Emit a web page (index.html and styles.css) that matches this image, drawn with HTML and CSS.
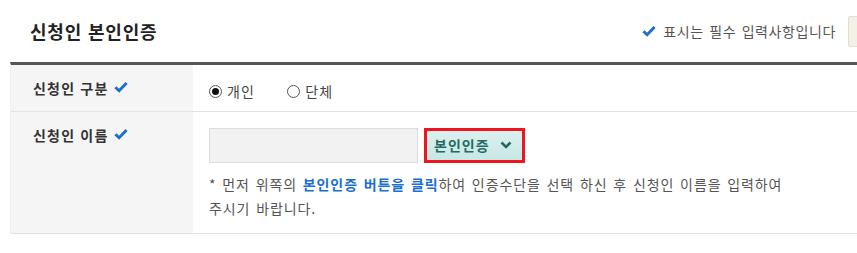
FILE: index.html
```html
<!DOCTYPE html>
<html lang="ko">
  <head>
    <meta charset="utf-8">
    <title>신청인 본인인증</title>
    <link rel="stylesheet" href="styles.css">
  </head>
  <body>

    <div class="auth">

      <!-- 제목 -->
      <div class="auth__head">
        <h2 class="auth__title">신청인 본인인증</h2>
        <div class="auth__note">
          <svg class="ico-check" viewBox="0 0 16 14"><path d="M1.5 7.2 L5.8 11.4 L14.5 2.2" /></svg>
          표시는 필수 입력사항입니다
        </div>
        <span class="auth__btn-side"></span>
      </div>

      <!-- 입력 표 -->
      <div class="form-tbl">
        <div class="form-tbl__row">
          <div class="form-tbl__label">신청인 구분 <svg class="ico-check" viewBox="0 0 16 14"><path d="M1.5 7.2 L5.8 11.4 L14.5 2.2" /></svg></div>
          <div class="form-tbl__value form-tbl__value--radio">
            <label class="radio"><span class="radio__dot is-on"></span>개인</label>
            <label class="radio"><span class="radio__dot"></span>단체</label>
          </div>
        </div>
        <div class="form-tbl__row">
          <div class="form-tbl__label">신청인 이름 <svg class="ico-check" viewBox="0 0 16 14"><path d="M1.5 7.2 L5.8 11.4 L14.5 2.2" /></svg></div>
          <div class="form-tbl__value">
            <div class="name-line">
              <input class="name-input" type="text" disabled>
              <span class="auth-btn">
                <span class="auth-btn__inner">본인인증
                  <svg class="ico-down" viewBox="0 0 12 8"><path d="M1.5 1.5 L6 6 L10.5 1.5" /></svg>
                </span>
              </span>
            </div>
            <p class="help">* 먼저 위쪽의 <b class="help__em">본인인증 버튼을 클릭</b>하여 인증수단을 선택 하신 후 신청인 이름을 입력하여<br>주시기 바랍니다.</p>
          </div>
        </div>
      </div>

    </div>

  </body>
</html>
```

FILE: styles.css
```css
html, body { margin: 0; background: #fff; overflow: hidden; }

body {
  font-family: "Noto Sans CJK KR", "Noto Sans", sans-serif;
  font-size: 14px;
  color: #333;
  letter-spacing: .6px;
}

.auth { margin-left: 10px; width: 880px; }

.auth__head {
  display: flex;
  align-items: center;
  height: 62px;
}

.auth__title {
  margin: 0 0 0 20px;
  font-size: 18px;
  font-weight: 700;
  color: #222;
  letter-spacing: .8px;
}

.auth__note {
  margin-left: auto;
  color: #555;
  font-size: 14px;
  word-spacing: 1px;
  display: flex;
  align-items: center;
}
.auth__note .ico-check { margin-right: 7px; }

.auth__btn-side {
  width: 40px; height: 29px;
  margin: 0 0 0 12px;
  background: #f3f1e6;
  border: 1px solid #e2dfd0;
  border-radius: 2px;
}

.ico-check {
  width: 14px; height: 12px;
  fill: none;
  stroke: #1b6fd0;
  stroke-width: 3.4;
  vertical-align: 1px;
}

.form-tbl {
  border-top: 3px solid #555;
  border-left: 1px solid #eee;
}

.form-tbl__row {
  display: flex;
  border-bottom: 1px solid #e2e2e2;
}

.form-tbl__label {
  width: 160px;
  flex: none;
  padding: 13px 0 0 22px;
  background: #f5f5f5;
  font-weight: 700;
  color: #333;
  line-height: 20px;
  letter-spacing: 1.2px;
}
.form-tbl__label .ico-check { margin-left: 0; }

.form-tbl__value {
  padding: 16px 0 13px 16px;
  line-height: 20px;
}
.form-tbl__value--radio { display: flex; gap: 32px; padding-bottom: 10px; }

.radio { display: flex; align-items: center; color: #444; letter-spacing: 1.2px; }

.radio__dot {
  width: 11px; height: 11px;
  margin-right: 5px;
  border: 1px solid #555;
  border-radius: 50%;
  display: flex;
  align-items: center;
  justify-content: center;
}
.radio__dot.is-on::after {
  content: "";
  width: 7px; height: 7px;
  border-radius: 50%;
  background: #111;
}

.name-line { display: flex; align-items: center; gap: 6px; }

.name-input {
  width: 209px; height: 35px;
  box-sizing: border-box;
  margin: 0;
  background: #f2f2f2;
  border: 1px solid #dcdcdc;
}

.auth-btn {
  margin-top: -1px;
  border: 3px solid #f0141e;
  background: #fff;
}

.auth-btn__inner {
  display: flex;
  align-items: center;
  height: 29px;
  padding: 0 10px 0 7px;
  background: linear-gradient(#dcf1ef, #c6e7e4);
  color: #236a63;
  font-weight: 700;
  font-size: 14px;
  letter-spacing: 1px;
}

.ico-down {
  width: 12px; height: 8px;
  margin-left: 10px;
  fill: none;
  stroke: #236a63;
  stroke-width: 2.6;
}

.help {
  margin: 9px 0 0;
  color: #555;
  line-height: 24px;
  word-spacing: 1px;
  letter-spacing: .9px;
}
.help__em { color: #1b6fd0; }
```
